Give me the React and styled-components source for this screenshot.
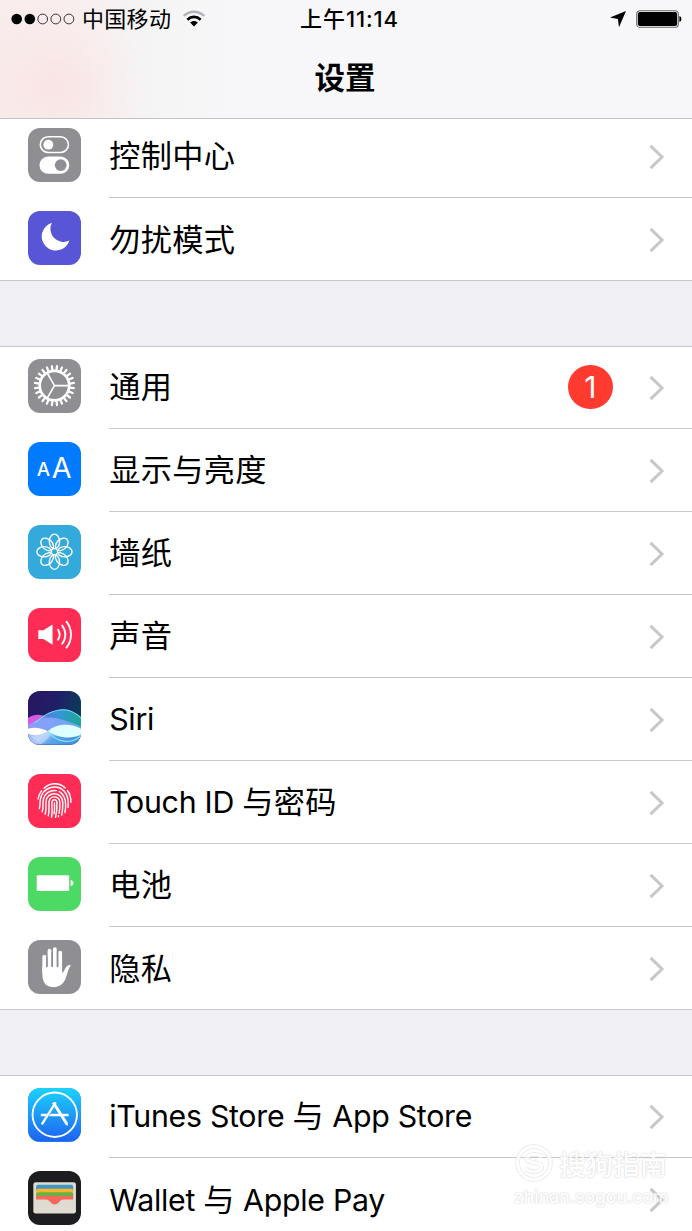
import React from "react";
import styled, { createGlobalStyle } from "styled-components";

const GlobalStyle = createGlobalStyle`
  * {
    box-sizing: border-box;
  }
  body {
    margin: 0;
    background-color: #efeff4;
    color: #000;
    font-family: Inter, "Noto Sans CJK SC", sans-serif;
    overflow: hidden;
  }
`;

const ControlCenterIcon = () => (
  <Glyph viewBox="0 0 54 54">
    <rect x="12.4" y="8.9" width="28.4" height="15.8" rx="7.9" fill="none" stroke="#fff" strokeWidth="1.6" />
    <circle cx="20.5" cy="16.8" r="5" fill="#fff" />
    <rect x="11.6" y="28.8" width="30" height="17.4" rx="8.7" fill="#fff" />
    <circle cx="33" cy="37.5" r="5.9" fill="#8e8e93" />
  </Glyph>
);

const MoonIcon = () => (
  <Glyph viewBox="0 0 54 54">
    <path d="M24.2 11.8A14.3 14.3 0 1 0 41.8 29.8A13.2 13.2 0 0 1 24.2 11.8Z" fill="#fff" />
  </Glyph>
);

const GearIcon = () => (
  <Glyph viewBox="0 0 54 54">
    <g transform="translate(26.7 26.8)" stroke="#fff" fill="none">
      <circle r="14.9" strokeWidth="2.7" />
      {Array.from({ length: 24 }, (_, i) => (
        <path key={i} d="M15.8 0H19.8" strokeWidth="2.3" strokeLinecap="round" transform={`rotate(${i * 15 + 7.5})`} />
      ))}
      {[0, 120, 240].map((angle) => (
        <path key={angle} d="M0 0H14" strokeWidth="1.7" transform={`rotate(${angle})`} />
      ))}
    </g>
  </Glyph>
);

const DisplayIcon = () => (
  <Glyph viewBox="0 0 54 54">
    <text x="8.9" y="34" fontSize="19" fontWeight="500" fill="#fff">A</text>
    <text x="24" y="36.7" fontSize="29" fontWeight="400" fill="#fff">A</text>
  </Glyph>
);

const FlowerIcon = () => (
  <Glyph viewBox="0 0 54 54">
    <g transform="translate(26.7 27)" stroke="#fff" strokeWidth="1.35" fill="none">
      {Array.from({ length: 8 }, (_, i) => (
        <ellipse key={i} cy="-10.4" rx="5.2" ry="7.4" transform={`rotate(${i * 45})`} />
      ))}
    </g>
  </Glyph>
);

const SpeakerIcon = () => (
  <Glyph viewBox="0 0 54 54">
    <path d="M10.4 22.4H15.6L24.8 16.6V37L15.6 31.2H10.4Z" fill="#fff" />
    <g fill="none" stroke="#fff" strokeWidth="1.9" strokeLinecap="round">
      <path d="M30.3 21.9A9 9 0 0 1 30.3 31.9" />
      <path d="M34.5 17.7A15 15 0 0 1 34.5 36.1" />
      <path d="M38.8 13.8A21 21 0 0 1 38.8 40" />
    </g>
  </Glyph>
);

const SiriIcon = () => (
  <Glyph viewBox="0 0 54 54" preserveAspectRatio="none">
    <defs>
      <linearGradient id="siriNight" x1="0" y1="0" x2="1" y2="0.3">
        <stop offset="0" stopColor="#2b1460" />
        <stop offset="0.55" stopColor="#1f1f68" />
        <stop offset="1" stopColor="#0d3b58" />
      </linearGradient>
      <linearGradient id="siriPink" x1="0" y1="0" x2="1" y2="0">
        <stop offset="0" stopColor="#e254dc" />
        <stop offset="1" stopColor="#a277ee" />
      </linearGradient>
      <linearGradient id="siriBlue" x1="0" y1="0" x2="1" y2="0">
        <stop offset="0" stopColor="#8b6be6" />
        <stop offset="0.55" stopColor="#3fa5f0" />
        <stop offset="1" stopColor="#1dbb9f" />
      </linearGradient>
      <linearGradient id="siriBase" x1="0" y1="0" x2="1" y2="0.3">
        <stop offset="0" stopColor="#8fbcf5" />
        <stop offset="0.35" stopColor="#b3c3f8" />
        <stop offset="0.6" stopColor="#58a3ea" />
        <stop offset="1" stopColor="#4a8bdf" />
      </linearGradient>
    </defs>
    <rect width="54" height="54" fill="url(#siriNight)" />
    <path d="M0 27C8 22 16 23 26 30L30 42H0Z" fill="url(#siriPink)" />
    <path d="M0 37C14 30 22 18.5 36 18.5C44 18.5 50 24 54 28V44H0Z" fill="url(#siriBlue)" opacity="0.85" />
    <path d="M0 34C12 28 20 25 31 28C39 30 46 33 54 36V46H0Z" fill="#88a8fb" opacity="0.8" />
    <path d="M0 41H54V54H0Z" fill="url(#siriBase)" />
    <path d="M7 32C14 27 22 19 36 19C43 19 49 23 54 27.5" fill="none" stroke="#6cdcf2" strokeWidth="1.1" />
    <path d="M12 54C22 49 26 40 20 40C15 42 8 46 2 45" fill="#cfe8ff" opacity="0.5" />
    <path d="M0 38C7 35.8 14 37.5 20 40.6C14 44 7 46.2 0 43Z" fill="#fff" />
    <path d="M20 40.6C29 32 44 32.6 54 38.4V44C43 49.2 29 47 20 40.6Z" fill="#deffff" />
    <path d="M20 41C30 53 45 54 54 44.5" fill="none" stroke="#7be3f2" strokeWidth="1.3" />
  </Glyph>
);

const FingerprintIcon = () => (
  <Glyph viewBox="0 0 54 54">
    <g fill="none" stroke="#fff" strokeWidth="1.45" strokeLinecap="round">
      <path d="M16.2 14.3C22.5 8.4 31.5 8.4 37.5 14" />
      <path d="M10.2 25.2C10.8 21.5 12 19 13.8 16.8M39.7 16.6C42.3 19.7 43.4 23.4 43.3 28.5" />
      <path d="M11.5 34.8C12.6 31.5 11.7 29 12.5 25.6C14.6 13.6 28.7 9.2 36.6 17.4C40.4 21.5 41 27 40.5 33.8" />
      <path d="M14.3 38.2C15.8 34 14.8 30.4 15.3 27C16.2 19 23.2 15.8 28.8 16.8M31.7 17.8C36.8 20.7 38 26 38 31.2C38 34 37.7 36.4 37.3 38.8" />
      <path d="M17.3 40.5C18.7 36.5 17.9 31.7 18.2 27.7C19 17.2 34.7 17 35.1 29C35.2 33.8 34.8 38 34 41.4" />
      <path d="M20.4 42.2C21.8 37.5 20.9 32 21.2 28.2C22 21.3 31.9 21.2 32.2 29.2C32.3 33 32 36.6 31.4 39.6M30.9 42.1L30.7 43" />
      <path d="M23.7 43.4C25 38.5 23.9 33 24.1 29C24.4 25 29 25 29.2 29C29.5 34.6 28.8 39.5 27.8 43.8" />
      <path d="M26.7 29.2C26.9 33 26.9 36.5 26.3 40" />
    </g>
  </Glyph>
);

const BatteryIcon = () => (
  <Glyph viewBox="0 0 54 54">
    <rect x="8.8" y="18.4" width="32.8" height="15.8" rx="1" fill="#fff" />
    <path d="M43 23.2C47 24 47 28.6 43 29.4Z" fill="#fff" />
  </Glyph>
);

const HandIcon = () => (
  <Glyph viewBox="0 0 54 54">
    <g stroke="#fff" strokeWidth="3.8" strokeLinecap="round">
      <path d="M16.4 16.7V32" />
      <path d="M21.7 10.8V30" />
      <path d="M27.1 9.2V30" />
      <path d="M32.5 12.8V32" />
    </g>
    <path
      d="M14.5 27H34.4V33.4C36.2 32.6 37.2 29.6 38.3 27.6C39.5 25.7 41.5 24.6 43.2 25.7C41.3 28 40.3 31.5 39.2 35.2C37.5 42.4 33.5 47.6 26.4 47.6C17.8 47.6 14.5 42.3 14.5 34.5Z"
      fill="#fff"
    />
    <path d="M19.05 17V27.5M24.4 12V27M29.8 12V27.5" stroke="#8e8e93" strokeWidth="1.4" />
  </Glyph>
);

const AppStoreIcon = () => (
  <Glyph viewBox="0 0 54 54">
    <defs>
      <linearGradient id="store" x1="0" y1="0" x2="0" y2="1">
        <stop offset="0" stopColor="#1cd3fb" />
        <stop offset="1" stopColor="#1e62f1" />
      </linearGradient>
    </defs>
    <rect width="54" height="54" fill="url(#store)" />
    <g fill="none" stroke="#fff">
      <circle cx="27" cy="27" r="22.4" strokeWidth="1.9" />
      <path d="M13 27.2H41" strokeWidth="2.6" />
      <path d="M28.4 14.4L14.1 36.8" strokeWidth="3" stroke="#2b9df7" />
      <path d="M28 14.6L13.9 36.8" strokeWidth="2.3" />
      <path d="M25.5 14.6L38.8 35.6" strokeWidth="3" />
    </g>
    <path d="M37 36.4L40 34.6L40.2 38.4Z" fill="#fff" />
  </Glyph>
);

const WalletIcon = () => (
  <Glyph viewBox="0 0 54 54">
    <rect x="5.4" y="11.3" width="43" height="31.7" rx="2.4" fill="#dfdbd0" />
    <path d="M8.2 20V16Q8.2 14 10.2 14H43.6Q45.6 14 45.6 16V20Z" fill="#3f97c4" />
    <path d="M8.2 24V19.7Q8.2 17.8 10.2 17.8H43.6Q45.6 17.8 45.6 19.7V24Z" fill="#fdb52a" />
    <path d="M8.2 28V23.4Q8.2 21.5 10.2 21.5H43.6Q45.6 21.5 45.6 23.4V28Z" fill="#68b245" />
    <path
      d="M8.2 28.7V27Q8.2 25.2 10.2 25.2H43.6Q45.6 25.2 45.6 27V28.7H36C33.2 28.7 32.3 30.2 31 31.8C28.8 34.4 25.2 34.4 23 31.8C21.7 30.2 20.8 28.7 18 28.7Z"
      fill="#f5665c"
    />
  </Glyph>
);

const groups = [
  [
    { icon: <ControlCenterIcon />, color: "#8e8e93", label: "控制中心" },
    { icon: <MoonIcon />, color: "#5855d6", label: "勿扰模式" },
  ],
  [
    { icon: <GearIcon />, color: "#8e8e93", label: "通用", badge: 1 },
    { icon: <DisplayIcon />, color: "#007aff", label: "显示与亮度" },
    { icon: <FlowerIcon />, color: "#34aadc", label: "墙纸" },
    { icon: <SpeakerIcon />, color: "#ff2d55", label: "声音" },
    { icon: <SiriIcon />, color: "#7f9fe0", label: "Siri" },
    { icon: <FingerprintIcon />, color: "#ff2d55", label: "Touch ID 与密码" },
    { icon: <BatteryIcon />, color: "#4cd964", label: "电池" },
    { icon: <HandIcon />, color: "#8e8e93", label: "隐私" },
  ],
  [
    { icon: <AppStoreIcon />, color: "#1e9bf6", label: "iTunes Store 与 App Store" },
    { icon: <WalletIcon />, color: "#1d1d1f", label: "Wallet 与 Apple Pay" },
  ],
];

// Chinese runs are set slightly larger than the latin ones
const renderLabel = (label) =>
  label
    .split(/([\u4e00-\u9fff]+)/)
    .filter(Boolean)
    .map((run, i) => (/[\u4e00-\u9fff]/.test(run) ? <Han key={i}>{run}</Han> : run));

const StatusBar = () => (
  <Status>
    <Carrier>
      <svg width="64" height="12" viewBox="0 0 64 12">
        <circle cx="5.7" cy="6" r="5.3" />
        <circle cx="18.8" cy="6" r="5.3" />
        <g fill="none" stroke="#222" strokeWidth="0.9">
          <circle cx="31.7" cy="6" r="4.9" />
          <circle cx="44.8" cy="6" r="4.9" />
          <circle cx="57.9" cy="6" r="4.9" />
        </g>
      </svg>
      <CarrierName>中国移动</CarrierName>
      <svg width="22" height="18" viewBox="0 0 22 18">
        <path d="M0.8 6C6.5 0.3 15.5 0.3 21.2 6" fill="none" stroke="#b4b4b6" strokeWidth="2.4" />
        <path d="M4.4 9.7C8.2 6 13.8 6 17.6 9.7" fill="none" stroke="#000" strokeWidth="2.8" />
        <path d="M7.1 12.6C9.2 10.4 12.8 10.4 14.9 12.6L11 16.6Z" />
      </svg>
    </Carrier>
    <Time>上午11:14</Time>
    <Power>
      <svg width="18" height="18" viewBox="0 0 18 18">
        <path d="M17 1L10 17.3L8.9 9L1 7.6Z" />
      </svg>
      <svg width="46" height="18" viewBox="0 0 46 18">
        <rect x="0.7" y="0.7" width="41.6" height="16.6" rx="3.4" fill="none" stroke="#666" strokeWidth="1.1" />
        <rect x="1.9" y="1.9" width="39.2" height="14.2" rx="2" />
        <path d="M43.4 6C46 6.6 46 11.4 43.4 12Z" />
      </svg>
    </Power>
  </Status>
);

export default function App() {
  return (
    <Page>
      <GlobalStyle />
      <Header>
        <StatusBar />
        <Title>设置</Title>
      </Header>
      <Settings>
        {groups.map((rows, index) => (
          <Group key={index}>
            {rows.map((row) => (
              <Row key={row.label}>
                <Tile $color={row.color}>{row.icon}</Tile>
                <RowBody>
                  <Label>{renderLabel(row.label)}</Label>
                  {row.badge && <Badge>{row.badge}</Badge>}
                  <Chevron viewBox="0 0 16 26">
                    <path d="M1.6 1.9L13 13L1.6 24.1" />
                  </Chevron>
                </RowBody>
              </Row>
            ))}
          </Group>
        ))}
      </Settings>
      <Watermark>
        <WatermarkBrand>
          <svg width="40" height="40" viewBox="0 0 40 40" fill="none">
            <g stroke="#e2e2e2" strokeWidth="4.6">
              <circle cx="20" cy="20" r="16.4" />
              <path d="M28 13.6C22 9.4 12.6 11.4 12.6 15.4C12.6 20.6 27.6 18.4 27.6 24.2C27.6 28.8 17.8 30.4 11.6 26" />
            </g>
            <g stroke="#fff" strokeWidth="3.2">
              <circle cx="20" cy="20" r="16.4" />
              <path d="M28 13.6C22 9.4 12.6 11.4 12.6 15.4C12.6 20.6 27.6 18.4 27.6 24.2C27.6 28.8 17.8 30.4 11.6 26" />
            </g>
          </svg>
          搜狗指南
        </WatermarkBrand>
        <WatermarkUrl>zhinan.sogou.com</WatermarkUrl>
      </Watermark>
    </Page>
  );
}

const Page = styled.div`
  position: relative;
  width: 692px;
  height: 1231px;
  overflow: hidden;
  background-color: #efeff4;
`;

const Header = styled.header`
  position: relative;
  z-index: 1;
  height: 119px;
  border-bottom: 1px solid #c4c4c6;
  background: radial-gradient(ellipse 95px 85px at 54px 86px, rgba(250, 226, 226, 0.85) 0%, rgba(250, 230, 230, 0.4) 50%, rgba(248, 238, 238, 0) 100%),
    linear-gradient(90deg, #f9ecec 0, #f8eeee 80px, #f5f4f5 145px, #f7f7f9 240px);
`;

const Status = styled.div`
  display: grid;
  grid-template-columns: 1fr auto 1fr;
  align-items: center;
  height: 38px;
  padding: 0 10px 0 11px;
`;

const Carrier = styled.div`
  display: flex;
  align-items: center;
`;

const CarrierName = styled.span`
  margin: 0 12px 0 7px;
  font-size: 22px;
  line-height: 38px;
  letter-spacing: 0.3px;
`;

const Time = styled.span`
  padding-left: 6px;
  font-size: 22px;
  font-weight: 500;
  line-height: 38px;
  letter-spacing: 0.9px;
`;

const Power = styled.div`
  display: flex;
  justify-content: flex-end;
  align-items: center;
  gap: 9px;
`;

const Title = styled.h1`
  margin: 0;
  padding-right: 2px;
  font-size: 30.5px;
  font-weight: 600;
  line-height: 80px;
  text-align: center;
`;

/* the list is scrolled a few pixels under the header */
const Settings = styled.main`
  display: flex;
  flex-direction: column;
  gap: 65px;
  margin-top: -4px;
`;

const Group = styled.section`
  background-color: #fff;
  box-shadow: inset 0 1px #c8c7cc, inset 0 -1px #c8c7cc;
`;

const Row = styled.div`
  display: flex;
  height: 83px;
  padding-left: 27.7px;
`;

const Tile = styled.div`
  flex: none;
  width: 53.5px;
  height: 53.5px;
  margin: 13px 28px 0 0;
  border-radius: 12px;
  overflow: hidden;
  background-color: ${(props) => props.$color};
`;

const Glyph = styled.svg`
  display: block;
  width: 100%;
  height: 100%;
`;

const RowBody = styled.div`
  flex: 1;
  display: flex;
  align-items: center;
  padding: 1px 27px 0 0;
  ${Row}:not(:last-child) & {
    border-bottom: 1px solid #c8c7cc;
  }
`;

const Label = styled.span`
  flex: 1;
  font-size: 30.3px;
  letter-spacing: -0.28px;
  line-height: 41px;
  white-space: nowrap;
`;

const Han = styled.span`
  font-size: 31.2px;
  letter-spacing: 0.3px;
`;

const Badge = styled.span`
  width: 44.5px;
  height: 44.5px;
  margin: 0 36.5px 1px 0;
  border-radius: 50%;
  background-color: #ff3b30;
  color: #fff;
  font-size: 30px;
  line-height: 44px;
  text-align: center;
`;

const Chevron = styled.svg`
  width: 16px;
  height: 26px;
  fill: none;
  stroke: #c7c7cc;
  stroke-width: 3;
`;

const Watermark = styled.div`
  position: absolute;
  right: 22px;
  bottom: 22px;
  width: 156px;
  color: #fff;
  text-shadow: 0 0 2px #ccc, 0 0 1px #ccc;
  opacity: 0.8;
`;

const WatermarkBrand = styled.div`
  display: flex;
  align-items: center;
  gap: 5px;
  height: 40px;
  font-size: 27px;
  font-weight: 500;
  white-space: nowrap;
`;

const WatermarkUrl = styled.div`
  margin-top: 2px;
  font-size: 17.5px;
  font-weight: 500;
  line-height: 24px;
`;
